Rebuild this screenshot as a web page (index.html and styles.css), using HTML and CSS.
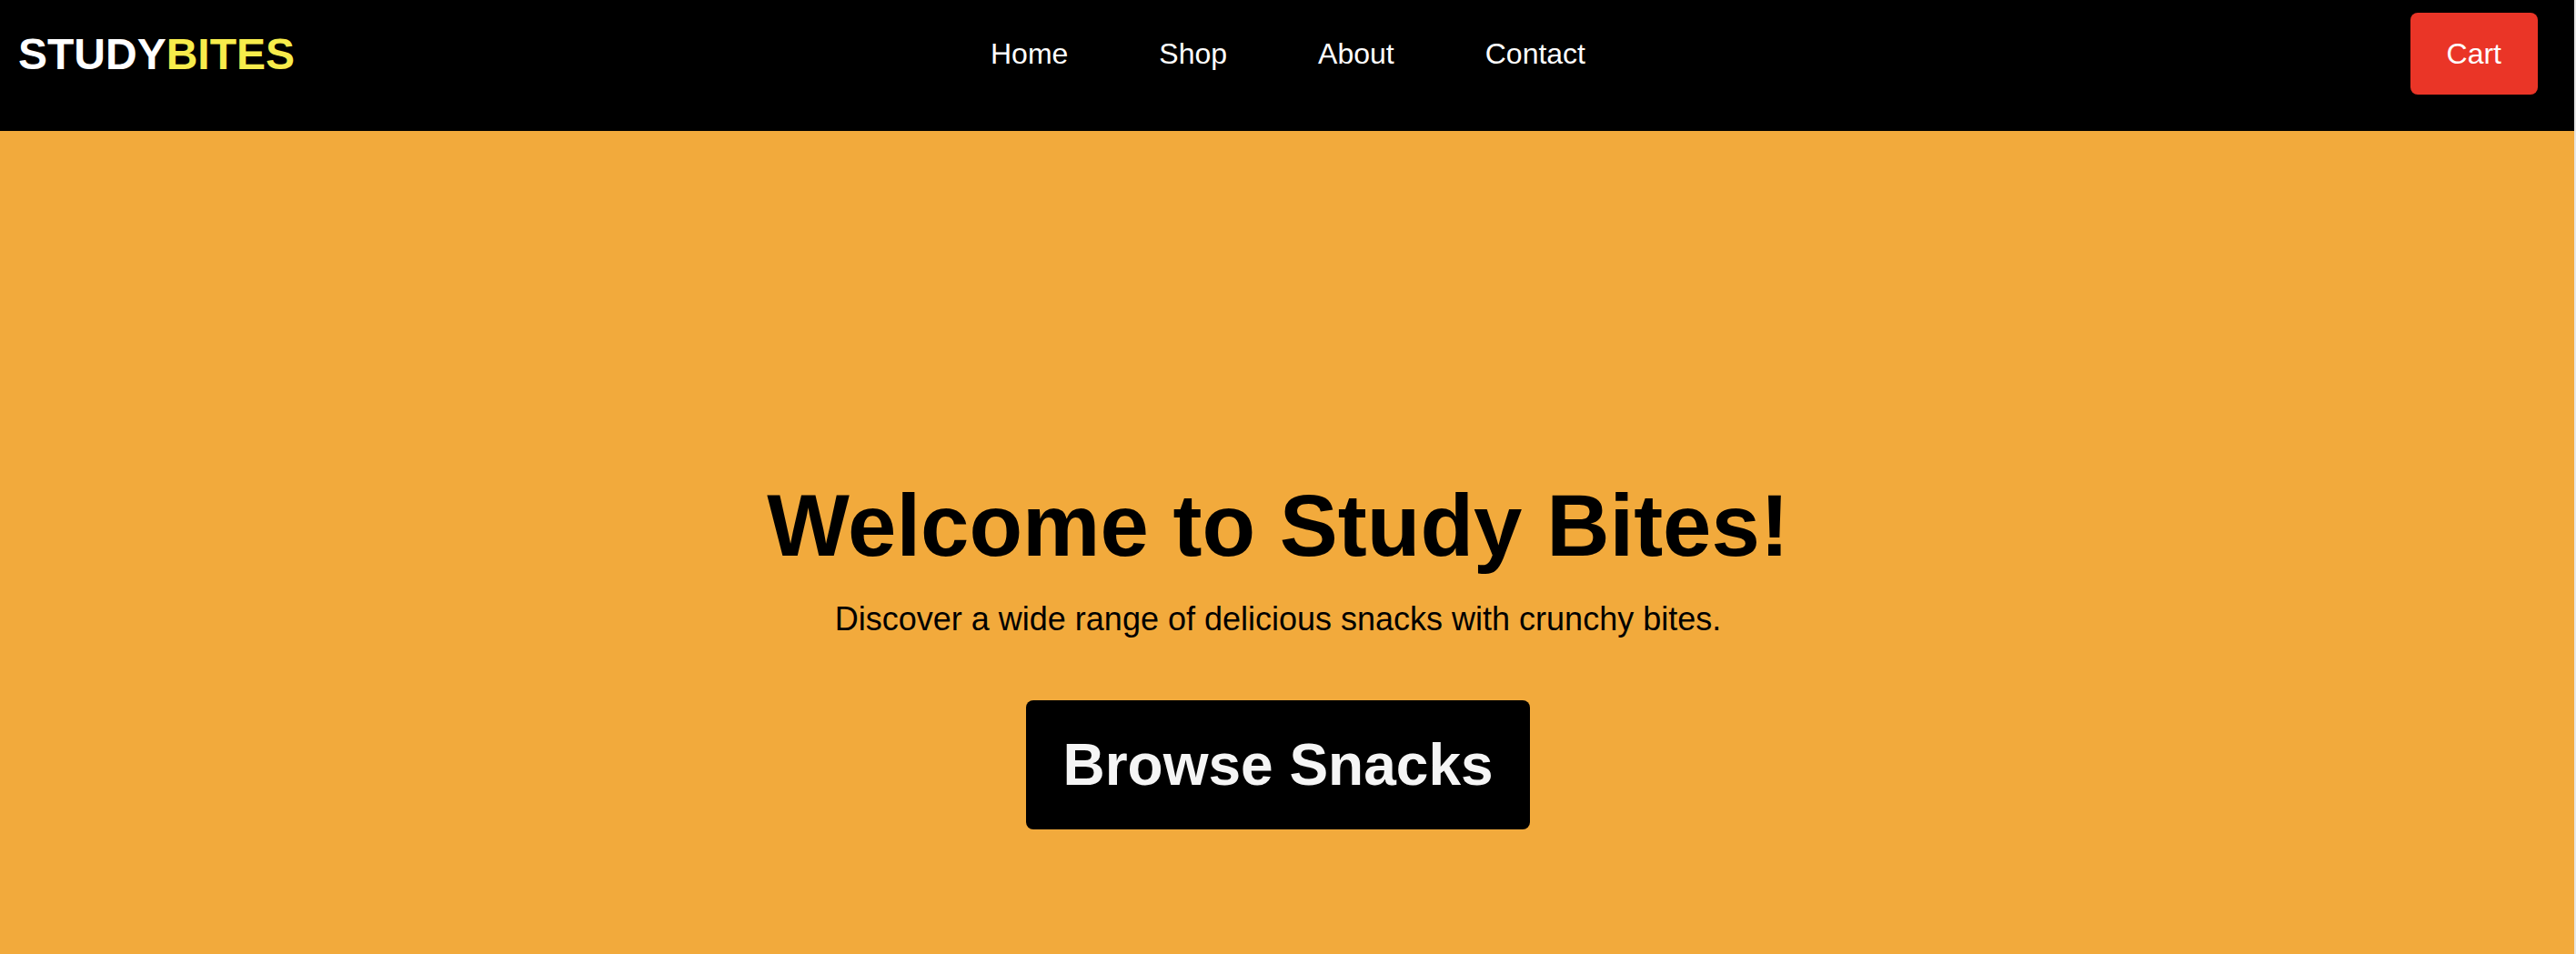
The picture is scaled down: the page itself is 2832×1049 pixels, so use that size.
FILE: index.html
```html
<!DOCTYPE html>
<html lang="en">
<head>
<meta charset="utf-8">
<title>Study Bites</title>
<link rel="stylesheet" href="styles.css">
</head>
<body>
<div class="page">
  <header class="site-header">
    <div class="logo"><span class="logo-study">STUDY</span><span class="logo-bites">BITES</span></div>
    <nav class="main-nav">
      <a href="#" class="nav-link">Home</a>
      <a href="#" class="nav-link">Shop</a>
      <a href="#" class="nav-link">About</a>
      <a href="#" class="nav-link">Contact</a>
    </nav>
    <a href="#" class="cart-btn">Cart</a>
  </header>
  <section class="hero">
    <h1 class="hero-title">Welcome to Study Bites!</h1>
    <p class="hero-text">Discover a wide range of delicious snacks with crunchy bites.</p>
    <a href="#" class="hero-btn">Browse Snacks</a>
  </section>
</div>
</body>
</html>
```
FILE: styles.css
```css
html, body {
  margin: 0;
  padding: 0;
}
body {
  background: #e6e6e6;
  font-family: "Liberation Sans", Arial, sans-serif;
  overflow: hidden;
}
.page {
  width: calc(100% - 2px);
}
.site-header {
  box-sizing: border-box;
  height: 144px;
  background: #000;
  display: grid;
  grid-template-columns: 1fr auto 1fr;
  align-items: center;
  padding: 0 40px 26px 20px;
}
.logo {
  font-size: 48px;
  font-weight: bold;
  line-height: normal;
  justify-self: start;
}
.logo-study { color: #ffffff; }
.logo-bites { color: #f7ec4b; }
.main-nav {
  display: flex;
  gap: 100px;
  padding-left: 22px;
}
.nav-link {
  color: #fff;
  text-decoration: none;
  font-size: 32px;
  line-height: normal;
}
.cart-btn {
  justify-self: end;
  background: #ea3527;
  color: #fff;
  text-decoration: none;
  font-size: 32px;
  height: 90px;
  line-height: 90px;
  padding: 0 40px;
  border-radius: 8px;
}
.hero {
  box-sizing: border-box;
  background: #f2aa3c;
  min-height: calc(100vh - 144px);
  display: flex;
  flex-direction: column;
  align-items: center;
  padding: 379px 40px 60px 20px;
}
.hero-title {
  margin: 0;
  font-size: 96px;
  font-weight: bold;
  line-height: normal;
  color: #000;
}
.hero-text {
  margin: 27px 0 0;
  font-size: 36px;
  line-height: normal;
  color: #000;
}
.hero-btn {
  margin-top: 68px;
  background: #000;
  color: #f5f5f5;
  text-decoration: none;
  font-size: 64px;
  font-weight: bold;
  line-height: normal;
  padding: 34px 40px;
  border-radius: 8px;
}
```
